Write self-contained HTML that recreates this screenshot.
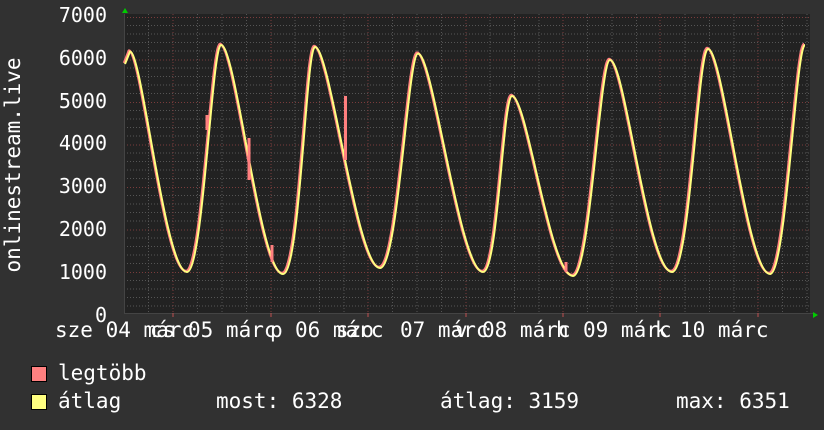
<!DOCTYPE html>
<html><head><meta charset="utf-8"><style>
html,body{margin:0;padding:0;background:#313131;}
body{width:824px;height:430px;overflow:hidden;position:relative;font-family:"DejaVu Sans Mono","Liberation Mono",monospace;color:#fff;}
.t{position:absolute;font-size:21px;line-height:21px;white-space:pre;color:#fff;}
.yl{position:absolute;right:717px;font-size:20px;line-height:20px;text-align:right;}
.sq{position:absolute;width:14px;height:14px;border:1px solid #000;}
</style></head><body>
<svg width="824" height="430" style="position:absolute;left:0;top:0">
<rect x="124" y="14" width="686" height="300" fill="#222"/>
<g stroke="#555" stroke-width="1" stroke-dasharray="1,2" fill="none">
<path d="M124 306h686M124 297.5h686M124 289h686M124 280.5h686M124 263.5h686M124 255h686M124 246.5h686M124 238h686M124 221h686M124 212.5h686M124 204h686M124 195.5h686M124 178.5h686M124 170h686M124 161.5h686M124 153h686M124 136h686M124 127.5h686M124 119h686M124 110.5h686M124 93.5h686M124 85h686M124 76.5h686M124 68h686M124 51h686M124 42.5h686M124 34h686M124 25.5h686"/>
<path d="M148.5 14v300M197.5 14v300M222 14v300M246.5 14v300M295 14v300M319.5 14v300M344 14v300M392.5 14v300M417 14v300M441.5 14v300M490 14v300M514.5 14v300M539 14v300M587.5 14v300M612 14v300M636.5 14v300M685 14v300M709.5 14v300M734 14v300M782.5 14v300M807 14v300"/>
</g>
<g stroke="#7a3c3c" stroke-width="1" stroke-dasharray="1,2" fill="none">
<path d="M124 272.5h686M124 230h686M124 187.5h686M124 145h686M124 102.5h686M124 60h686M124 17.5h686"/>
<path d="M173 14v300M271 14v300M368 14v300M466 14v300M563 14v300M660 14v300M758 14v300"/>
</g>
<path d="M124 313.5h690M124.5 14v300" stroke="#444" stroke-width="1"/>
<g stroke="#c05050" stroke-width="1"><path d="M173 313v4M271 313v4M368 313v4M466 313v4M563 313v4M660 313v4M758 313v4"/></g>
<polygon points="122,13 125,8 128,13" fill="#0c0"/>
<polygon points="813,312 818,315 813,318" fill="#0c0"/>
<g fill="none" stroke-linejoin="round">
<path d="M125 64 L130 51.5 C142 51.5 165 272 187 272 C203 272 212 45 221 45 C236 45 260 274 283 274 C300 274 306 47 315 47 C330 47 357 268 380 268 C398 268 408 53.6 418 53.6 C433 53.6 460 272 483 272 C498 272 503 96 512 96 C527 96 550 276 573 276 C590 276 600 60 610 60 C625 60 648 272 672 272 C690 272 698 49 708 49 C723 49 747 274 770 274 C786 274 796 45 805 45" stroke="#ff7f7f" stroke-width="2.5" transform="translate(-1,-1)"/>
<path d="M125 64 L130 51.5 C142 51.5 165 272 187 272 C203 272 212 45 221 45 C236 45 260 274 283 274 C300 274 306 47 315 47 C330 47 357 268 380 268 C398 268 408 53.6 418 53.6 C433 53.6 460 272 483 272 C498 272 503 96 512 96 C527 96 550 276 573 276 C590 276 600 60 610 60 C625 60 648 272 672 272 C690 272 698 49 708 49 C723 49 747 274 770 274 C786 274 796 45 805 45" stroke="#ffff80" stroke-width="2"/>
<path d="M345.5 96V160M249 138V180M272 245V262M207 115V130M566 262V272" stroke="#ff7f7f" stroke-width="3"/>
</g>
<text x="20" y="165" transform="rotate(-90 20 165)" text-anchor="middle" font-family="DejaVu Sans Mono,monospace" font-size="21" fill="#fff">onlinestream.live</text>
</svg>
<div class="yl" style="top:5px">7000</div>
<div class="yl" style="top:48px">6000</div>
<div class="yl" style="top:91px">5000</div>
<div class="yl" style="top:133px">4000</div>
<div class="yl" style="top:176px">3000</div>
<div class="yl" style="top:219px">2000</div>
<div class="yl" style="top:262px">1000</div>
<div class="yl" style="top:305px">0</div>
<div class="t" style="left:55px;top:320px">sze 04 márc</div>
<div class="t" style="left:150px;top:320px">cs</div>
<div class="t" style="left:188px;top:320px">05 márc</div>
<div class="t" style="left:270px;top:320px">p</div>
<div class="t" style="left:295px;top:320px">06 márc</div>
<div class="t" style="left:336px;top:320px">szo</div>
<div class="t" style="left:400px;top:320px">07 márc</div>
<div class="t" style="left:455px;top:320px">v</div>
<div class="t" style="left:482px;top:320px">08 márc</div>
<div class="t" style="left:556px;top:320px">h</div>
<div class="t" style="left:583px;top:320px">09 márc</div>
<div class="t" style="left:655px;top:320px">k</div>
<div class="t" style="left:680px;top:320px">10 márc</div>
<div class="sq" style="left:31px;top:366px;background:#ff8080"></div>
<div class="sq" style="left:31px;top:394px;background:#ffff80"></div>
<div class="t" style="left:58px;top:363px">legtöbb</div>
<div class="t" style="left:58px;top:391px">átlag</div>
<div class="t" style="left:216px;top:391px">most: 6328</div>
<div class="t" style="left:440px;top:391px">átlag: 3159</div>
<div class="t" style="left:676px;top:391px">max: 6351</div>
</body></html>
